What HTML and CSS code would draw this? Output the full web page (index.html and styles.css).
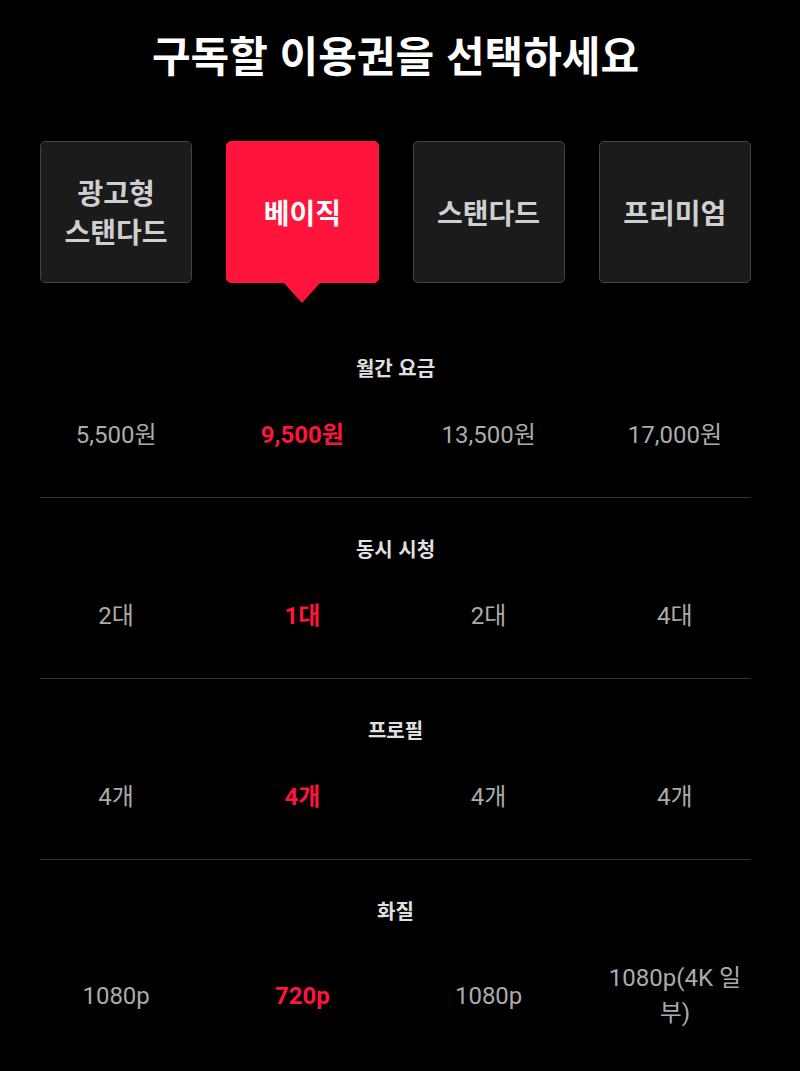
FILE: index.html
```html
<!DOCTYPE html>
<html lang="ko">
<head>
<meta charset="utf-8">
<title>이용권 선택</title>
<link rel="stylesheet" href="styles.css">
</head>
<body>
<main class="page">
  <h1 class="title">구독할 이용권을 선택하세요</h1>
  <div class="plans">
    <button class="plan">광고형<br>스탠다드</button>
    <button class="plan active">베이직</button>
    <button class="plan">스탠다드</button>
    <button class="plan">프리미엄</button>
  </div>
  <section class="row">
    <h2 class="label">월간 요금</h2>
    <div class="values">
      <span>5,500원</span><span class="sel">9,500원</span><span>13,500원</span><span>17,000원</span>
    </div>
  </section>
  <section class="row">
    <h2 class="label">동시 시청</h2>
    <div class="values">
      <span>2대</span><span class="sel">1대</span><span>2대</span><span>4대</span>
    </div>
  </section>
  <section class="row">
    <h2 class="label">프로필</h2>
    <div class="values">
      <span>4개</span><span class="sel">4개</span><span>4개</span><span>4개</span>
    </div>
  </section>
  <section class="row last">
    <h2 class="label">화질</h2>
    <div class="values">
      <span>1080p</span><span class="sel">720p</span><span>1080p</span><span>1080p(4K 일부)</span>
    </div>
  </section>
</main>
</body>
</html>
```

FILE: styles.css
```css
* { box-sizing: border-box; }
html, body { background: #000; }
body {
  margin: 0;
  font-family: Roboto, "Noto Sans CJK KR", sans-serif;
  color: #fff;
}
.page {
  width: 711px;
  margin-left: 40px;
  padding-top: 26px;
}
.title {
  margin: 0;
  text-align: center;
  font-family: "Noto Sans CJK KR", sans-serif;
  font-size: 42px;
  line-height: 56px;
  font-weight: 700;
  color: #fff;
}
.plans {
  display: grid;
  grid-template-columns: repeat(4, 1fr);
  column-gap: 34px;
  margin-top: 59px;
}
.plan {
  position: relative;
  height: 142px;
  background: #1b1b1b;
  border: 1px solid #444;
  border-radius: 5px;
  color: #cfcfcf;
  font-family: "Noto Sans CJK KR", sans-serif;
  font-size: 28px;
  font-weight: 700;
  line-height: 39px;
  padding: 0;
}
.plan.active {
  background: #ff153c;
  border-color: #ff153c;
  color: #fff;
}
.plan.active::after {
  content: "";
  position: absolute;
  left: 50%;
  top: 100%;
  margin-left: -18px;
  margin-top: 1px;
  border-left: 18px solid transparent;
  border-right: 18px solid transparent;
  border-top: 20px solid #ff153c;
}
.row {
  padding: 37px 0 44px;
  border-bottom: 1px solid #333;
}
.plans + .row { margin-top: 34px; }
.row.last { border-bottom: none; }
.label {
  margin: 0;
  text-align: center;
  font-family: "Noto Sans CJK KR", sans-serif;
  font-size: 20px;
  line-height: 27px;
  font-weight: 700;
  color: #e0e0e0;
}
.values {
  display: grid;
  grid-template-columns: repeat(4, 1fr);
  column-gap: 34px;
  align-items: center;
  margin-top: 37px;
}
.values span {
  text-align: center;
  font-size: 24px;
  line-height: 35px;
  color: #ababab;
}
.values .sel {
  color: #ff153c;
  font-weight: 700;
}
```
